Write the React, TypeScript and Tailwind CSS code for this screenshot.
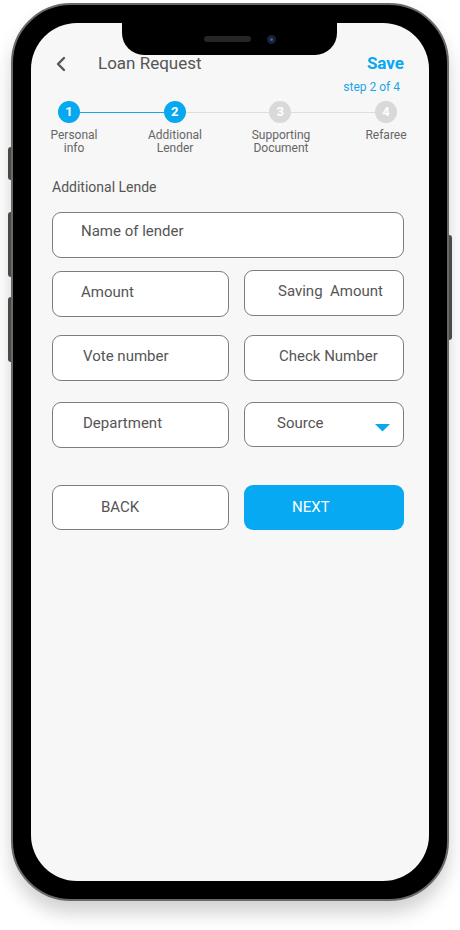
function Circle({ n, active }: { n: number; active?: boolean }) {
  return (
    <div
      className={
        active
          ? "w-[22px] h-[22px] shrink-0 rounded-full bg-[#06a8f0] text-white text-[13px] font-bold flex items-center justify-center"
          : "w-[22px] h-[22px] shrink-0 rounded-full bg-[#d9d9d9] text-white text-[13px] font-bold flex items-center justify-center"
      }
    >
      {n}
    </div>
  );
}

function Field({ label, className, pad }: { label: string; className: string; pad: string }) {
  return (
    <div className={"h-[46px] rounded-[9px] border border-[#7d7d7d] bg-white " + className}>
      <div className={"text-[15px] leading-5 text-[#555] " + pad}>{label}</div>
    </div>
  );
}

export default function App() {
  return (
    <div className="w-[460px] h-[930px] bg-white overflow-hidden relative" style={{ fontFamily: "Roboto, 'Liberation Sans', sans-serif" }}>
      <div className="relative ml-[11px] mt-[3px] w-[438px] h-[898px] rounded-[60px] bg-black border-2 border-[#6a6964] p-[18px] shadow-[0_12px_18px_rgba(0,0,0,0.18)]">
        {/* side buttons */}
        <div className="absolute left-[-5px] top-[142px] w-[3px] h-[33px] rounded-l-sm bg-[#4a4a48]" />
        <div className="absolute left-[-5px] top-[207px] w-[3px] h-[65px] rounded-l-sm bg-[#4a4a48]" />
        <div className="absolute left-[-5px] top-[292px] w-[3px] h-[65px] rounded-l-sm bg-[#4a4a48]" />
        <div className="absolute right-[-5px] top-[230px] w-[3px] h-[105px] rounded-r-sm bg-[#4a4a48]" />

        <div className="relative w-[398px] h-[858px] rounded-[46px] bg-[#f7f7f7] overflow-hidden">
          {/* notch */}
          <div className="absolute left-[91px] top-0 w-[215px] h-[32px] bg-black rounded-b-[22px] flex items-center justify-center gap-[16px] pl-[20px]">
            <div className="w-[47px] h-[6px] rounded-full bg-[#262626]" />
            <div className="w-[9px] h-[9px] rounded-full bg-[#1a2138] flex items-center justify-center">
              <div className="w-[3px] h-[3px] rounded-full bg-[#3c5a9a]" />
            </div>
          </div>

          <div className="pt-[29px] pl-[21px] pr-[25px]">
            {/* header */}
            <div className="h-[24px] flex items-center">
              <svg width="12" height="16" viewBox="0 0 12 16" className="ml-[3px]">
                <polyline points="9,2 3,8 9,14" fill="none" stroke="#555" strokeWidth="2.4" strokeLinecap="round" strokeLinejoin="round" />
              </svg>
              <div className="ml-[31px] text-[17px] text-[#555]">Loan Request</div>
              <div className="ml-auto text-[17px] font-bold text-[#06a8f0]">Save</div>
            </div>
            <div className="mt-[3px] pr-[4px] text-right text-[12px] leading-4 text-[#1aa6e6]">step 2 of 4</div>

            {/* stepper */}
            <div className="mt-[6px] flex items-center pl-[6px] pr-[7px]">
              <Circle n={1} active />
              <div className="h-px flex-1 bg-[#1ba5e6]" />
              <Circle n={2} active />
              <div className="h-px flex-1 bg-[#dddddd]" />
              <Circle n={3} />
              <div className="h-px flex-1 bg-[#dddddd]" />
              <Circle n={4} />
            </div>
            <div className="mt-[6px] flex text-[12px] leading-[13px] text-[#666]">
              <div className="w-[60px] shrink-0 ml-[-8px] text-center">Personal<br />info</div>
              <div className="w-[60px] shrink-0 ml-[41px] text-center">Additional<br />Lender</div>
              <div className="w-[60px] shrink-0 ml-[46px] text-center">Supporting<br />Document</div>
              <div className="w-[60px] shrink-0 ml-[45px] text-center">Refaree</div>
            </div>

            <div className="mt-[22px] text-[14px] leading-5 text-[#555]">Additional Lende</div>

            <Field label="Name of lender" className="mt-[15px] w-full h-[45px]" pad="pt-[8px] pl-[28px]" />

            <div className="mt-[13px] flex justify-between">
              <Field label="Amount" className="w-[177px]" pad="pt-[10px] pl-[28px]" />
              <Field label="Saving  Amount" className="w-[160px] mt-[-1px] whitespace-pre" pad="pt-[10px] pl-[33px]" />
            </div>
            <div className="mt-[18px] flex justify-between">
              <Field label="Vote number" className="w-[177px] h-[45px]" pad="pt-[10px] pl-[30px]" />
              <Field label="Check Number" className="w-[160px] h-[45px]" pad="pt-[10px] pl-[34px]" />
            </div>
            <div className="mt-[21px] flex justify-between">
              <Field label="Department" className="w-[177px] h-[45px]" pad="pt-[10px] pl-[30px]" />
              <div className="w-[160px] h-[45px] rounded-[9px] border border-[#7d7d7d] bg-white flex">
                <div className="pt-[10px] pl-[32px] text-[15px] leading-5 text-[#555]">Source</div>
                <svg width="15" height="8" viewBox="0 0 15 8" className="ml-auto mr-[13px] mt-[21px]">
                  <polygon points="0,0 15,0 7.5,7.5" fill="#0aa6ec" />
                </svg>
              </div>
            </div>

            <div className="mt-[37px] flex justify-between">
              <div className="w-[177px] h-[45px] rounded-[9px] border border-[#7d7d7d] bg-white flex items-center pl-[48px] text-[15px] text-[#555]">BACK</div>
              <div className="w-[160px] h-[45px] rounded-[9px] bg-[#06a9f2] flex items-center pl-[48px] text-[15px] text-white">NEXT</div>
            </div>
          </div>
        </div>
      </div>
    </div>
  );
}
